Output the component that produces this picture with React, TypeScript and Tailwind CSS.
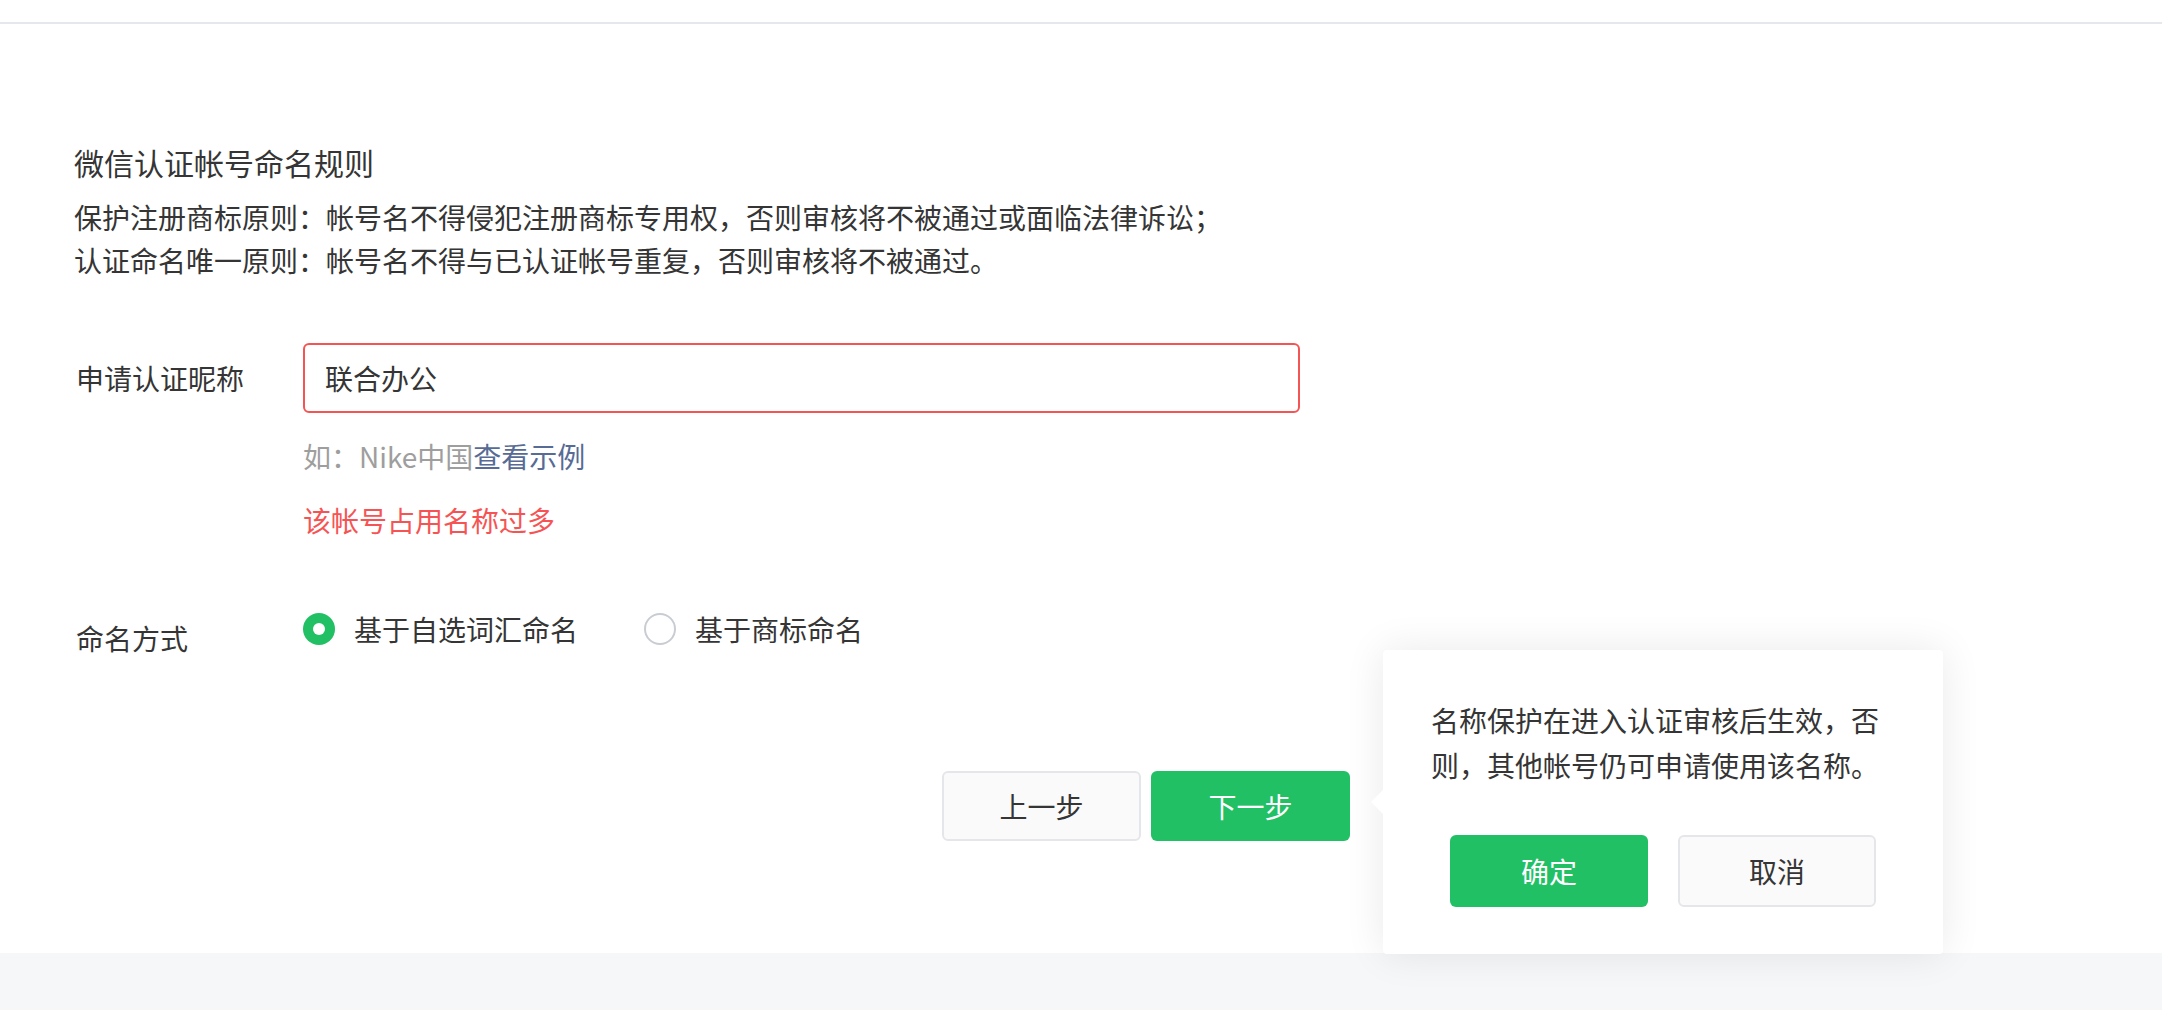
import React from "react";

const font = { fontFamily: '"Noto Sans CJK SC", "Noto Sans", sans-serif' };

function Radio({ checked, label }: { checked?: boolean; label: string }) {
  return (
    <label className="flex items-center gap-[19px] text-[28px] leading-[40px] text-[#353535]">
      {checked ? (
        <span className="flex h-[32px] w-[32px] items-center justify-center rounded-full bg-[#21c065]">
          <span className="h-[12px] w-[12px] rounded-full bg-white" />
        </span>
      ) : (
        <span className="h-[32px] w-[32px] rounded-full border-2 border-[#c9cdd3] bg-white" />
      )}
      {label}
    </label>
  );
}

export default function App() {
  return (
    <div className="min-h-screen bg-[#f6f7f9]" style={font}>
      <div className="bg-white pb-[112px]">
        {/* top bar */}
        <div className="h-[24px] border-b-2 border-[#e4e7eb]" />

        <div className="pl-[74px] pt-[116px]">
          {/* rules */}
          <h2 className="text-[30px] font-normal leading-[44px] text-[#353535]">
            微信认证帐号命名规则
          </h2>
          <div className="mt-[12px] text-[28px] leading-[43px] text-[#353535]">
            <p>保护注册商标原则：帐号名不得侵犯注册商标专用权，否则审核将不被通过或面临法律诉讼；</p>
            <p>认证命名唯一原则：帐号名不得与已认证帐号重复，否则审核将不被通过。</p>
          </div>

          {/* nickname */}
          <div className="mt-[61px] flex">
            <div className="flex h-[70px] w-[229px] items-center pl-[2px] text-[28px] text-[#353535]">
              申请认证昵称
            </div>
            <div className="flex flex-col">
              <input
                readOnly
                value="联合办公"
                className="h-[70px] w-[997px] rounded-[6px] border-2 border-[#f45454] bg-white px-[20px] text-[28px] text-[#353535] outline-none"
                style={font}
              />
              <p className="mt-[23px] text-[28px] leading-[40px] text-[#9e9e9e]">
                如：Nike中国<a className="text-[#576b95]">查看示例</a>
              </p>
              <p className="mt-[24px] text-[28px] leading-[40px] text-[#f65454]">
                该帐号占用名称过多
              </p>
            </div>
          </div>

          {/* naming method */}
          <div className="mt-[69px] flex h-[40px] items-start">
            <div className="w-[229px] pl-[2px] pt-[9px] text-[28px] leading-[40px] text-[#353535]">
              命名方式
            </div>
            <div className="flex items-center gap-[66px]">
              <Radio checked label="基于自选词汇命名" />
              <Radio label="基于商标命名" />
            </div>
          </div>

          {/* actions */}
          <div className="ml-[868px] mt-[122px] flex gap-[10px]">
            <button className="h-[70px] w-[199px] rounded-[6px] border-2 border-[#e4e6e9] bg-[#fafafa] text-[28px] text-[#353535]">
              上一步
            </button>
            <div className="relative">
              <button className="h-[70px] w-[199px] rounded-[6px] bg-[#21c065] text-[28px] text-white">
                下一步
              </button>

              {/* confirm popover */}
              <div className="absolute left-[calc(100%+33px)] top-[-121px] z-10 w-[560px] rounded-[4px] bg-white px-[48px] pb-[47px] pt-[48px] shadow-[0_0_40px_rgba(0,0,0,0.09)]">
                <span className="absolute left-[-12px] top-1/2 h-0 w-0 -translate-y-1/2 border-y-[12px] border-r-[12px] border-y-transparent border-r-white" />
                <p className="text-[28px] leading-[45px] text-[#353535]">
                  名称保护在进入认证审核后生效，否则，其他帐号仍可申请使用该名称。
                </p>
                <div className="mt-[47px] flex justify-center gap-[30px]">
                  <button className="h-[72px] w-[198px] rounded-[6px] bg-[#21c065] text-[28px] text-white">
                    确定
                  </button>
                  <button className="h-[72px] w-[198px] rounded-[6px] border-2 border-[#e4e6e9] bg-[#fafafa] text-[28px] text-[#353535]">
                    取消
                  </button>
                </div>
              </div>
            </div>
          </div>
        </div>
      </div>
    </div>
  );
}
